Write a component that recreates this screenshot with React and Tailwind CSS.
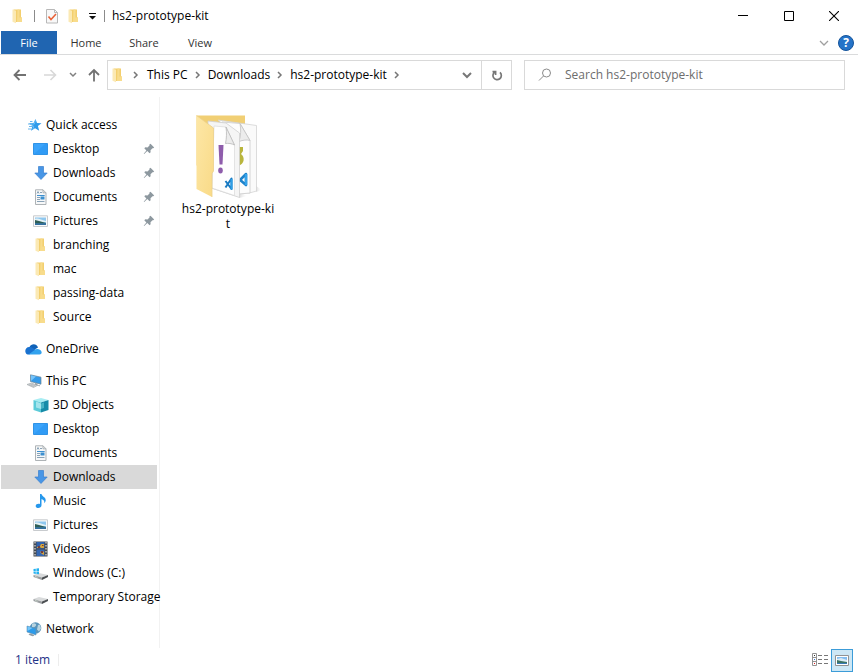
import React from "react";

function Svg({ className = "h-4 w-4", children, ...rest }) {
  return (
    <svg viewBox="0 0 16 16" className={"shrink-0 " + className} fill="none" aria-hidden="true" {...rest}>
      {children}
    </svg>
  );
}

function FolderIcon() {
  return (
    <Svg>
      <path d="M3.500 1.500h7.500v8h1v4.500h-8.500z" fill="#f3cf6e" />
      <path d="M7.500 1.500h2v8h2.500v4.500h-5z" fill="#f8dc8c" />
      <path d="M2.500 1.500l3.500 1.300v12.500l-3.500-1.500z" fill="#fbe9b4" />
    </Svg>
  );
}

function StarIcon() {
  return (
    <Svg>
      <path d="M9.500 2l1.500 4 4.500.2-3.600 2.700 1.300 4.800-4.100-2.500-4.200 2.600 1.500-4.700L3 6.200l4.600-.2z" fill="#2f9bea" />
      <path d="M9.500 3.200L8.300 7l-3.800-.1 3.200 2.400-.7 2.700" stroke="#79c7fa" strokeWidth="0.800" />
      <path d="M4 4.500h2.500M2 7h3M3 9.500h3M2 12h3" stroke="#5aaeea" strokeWidth="0.900" />
    </Svg>
  );
}

function DesktopIcon() {
  return (
    <Svg>
      <path d="M.5 2.500h14v11h-14z" fill="#3ba4fb" stroke="#3093e6" />
      <path d="M1 13L12 3h2v10z" fill="#2996f2" opacity="0.600" />
    </Svg>
  );
}

function DownloadIcon() {
  return (
    <Svg>
      <path d="M5.500 1.500h5v6.500h3.700L8 14.500 1.800 8h3.700z" fill="#4896e6" stroke="#3a80cf" strokeWidth="0.700" />
    </Svg>
  );
}

function DocumentIcon() {
  return (
    <Svg>
      <path d="M2.500.8h7.500l3 3v11.700h-10.500z" fill="#f7f8f9" stroke="#a5aaae" strokeWidth="0.900" />
      <path d="M10 .8v3h3" stroke="#a5aaae" strokeWidth="0.900" />
      <path d="M4 4.500l1-2 1 2M7 3.500h2M4 6.500h7.500M4 8.500h3M4 10.500h3M4 12.500h7.500" stroke="#6d8da6" strokeWidth="0.800" />
      <path d="M4 6h7.500v1H4zM7.500 7.500h4v3h-4z" fill="#3d90d0" />
    </Svg>
  );
}

function PictureIcon() {
  return (
    <Svg>
      <path d="M.5 2.800h14v10.700h-14z" fill="#fafafa" stroke="#c8cbce" />
      <path d="M2 4.500h11v7.500h-11z" fill="#8fc7ee" />
      <path d="M2 6c3-1.500 6 1 11 2v1h-11z" fill="#e3f1f5" />
      <path d="M2 7l4 1 7 2v.7h-11z" fill="#2f5f56" />
      <path d="M2 10.300h11v1.700h-11z" fill="#326f9f" />
    </Svg>
  );
}

function CloudIcon() {
  return (
    <Svg className="h-4 w-[17px]" viewBox="0 0 17 16">
      <path d="M4.500 6C6 2.500 11.500 2 13 6.500l-5 3z" fill="#0f62b8" />
      <path d="M.8 12c-1.500-3 .5-6.200 3.700-6 1.500 0 2.500.5 3.500 1.200l5 3-9 3.300c-1.500.1-2.700-.3-3.200-1.500z" fill="#1971cf" />
      <path d="M3.500 13.500L9 9.500c1.500-1.200 3-1.700 4.500-1.200 3.500.5 4.500 4.900 1 5.200z" fill="#32a2ee" />
    </Svg>
  );
}

function ComputerIcon() {
  return (
    <Svg>
      <path d="M4.500 1.800l10.500 2.400v7l-10.500-2.700z" fill="#349ae9" stroke="#6b8494" strokeWidth="0.700" />
      <path d="M5 2.300l5 1.200-5 4.500z" fill="#75c4fb" />
      <path d="M9 10l3 .8-1 1.500h3v1l-5-.8z" fill="#96a1a8" />
      <path d="M1 11.500l4.500-1.500 6 2.400L7.500 14.500z" fill="#d5d9dc" stroke="#9aa1a5" strokeWidth="0.600" />
      <path d="M3 11.700l5 1.800M4.500 11l5 1.700" stroke="#9aa1a5" strokeWidth="0.500" />
    </Svg>
  );
}

function CubeIcon() {
  return (
    <Svg>
      <path d="M.5 3L8 1l7.500 2L8 5.500z" fill="#a8edf3" />
      <path d="M.5 3L8 5.500v10L.5 13z" fill="#5ccbd9" />
      <path d="M15.500 3L8 5.500v10l7.500-2.500z" fill="#168ba8" />
      <path d="M3 4.500l5 2v5.500l-5-1.500z" fill="#a4e4ec" />
      <path d="M8 6.500l3-1v5.500L8 12z" fill="#48b4c6" />
    </Svg>
  );
}

function MusicIcon() {
  return (
    <Svg>
      <path d="M7 1h1.500c.3 2.500 4.500 3 4.200 6.500-.1 1.300-.8 2-1.400 2.700.4-2.300-.6-3.300-2.800-4.200v6.200c0 3.500-5.800 3.700-5.800.7 0-1.900 2.500-2.700 4.300-1.900z" fill="#2698ec" />
    </Svg>
  );
}

function VideoIcon() {
  return (
    <Svg>
      <path d="M.5.5h14v15H.5z" fill="#44484e" />
      <path d="M3.500 1h8v6.500h-8z" fill="#3163ad" />
      <path d="M3.500 8.500h8V15h-8z" fill="#3467b3" />
      <path d="M7 5l1-2h3v4H8zM4 6l3-1 1 1-2 1H4zM7 11l2-1 2 1v3l-2-1z" fill="#d4a33d" />
      <path d="M5 5h2v2H5zM8 10h2v2H8zM9 4h1.500v1H9z" fill="#773c39" />
      <path d="M2 1v14M13 1v14" stroke="#cfd2d5" strokeWidth="1.300" strokeDasharray="1.500 1.500" />
    </Svg>
  );
}

function DriveIcon({ windows }) {
  return (
    <Svg>
      <path d="M.5 10l5.500-2 9 2-6 2.500z" fill="#d8dadb" />
      <path d="M.5 10L9 12.500V15L.5 12z" fill="#9a9da0" />
      <path d="M9 12.500l6-2.500v2L9 15z" fill="#4c5053" />
      <path d="M2 11.500l2.500.8" stroke="#d9ead9" strokeWidth="0.700" />
      {windows && <path d="M.5 4l2.300-.3v2.300H.500zM3.400 3.600L6 3.200v2.800H3.400zM.5 6.500h2.300v2.400L.5 8.600zM3.400 6.500H6v2.800l-2.600-.3z" fill="#22b1f0" />}
    </Svg>
  );
}

function NetworkIcon() {
  return (
    <Svg>
      <circle cx="9.500" cy="7" r="5.800" fill="#5a94ba" />
      <path d="M6 3c2-2 5 .2 4 1.500S8 7 6 6zM12 4l2-.5 1 4-2 3-2-2z" fill="#b8d3df" />
      <path d="M1 5l9 2.500v6.500L1 11z" fill="#2d9bea" stroke="#6a92ad" strokeWidth="0.600" />
      <path d="M1.500 5.500l5 1.500-5 3z" fill="#76c7fa" />
      <path d="M4 12.500l3 1 1.500 1.200-2 .6-4-1.500z" fill="#8e9ca5" />
    </Svg>
  );
}

function PinIcon() {
  return (
    <Svg className="h-3 w-3" viewBox="0 0 12 12">
      <path d="M7.500.8l3.700 3.700-1 .8-.7-.1-2 2 .1 2-1 1-2.300-2.300L1.200 11l-.5-.3 2.700-3.200L1.300 5.300l1-1 2.200.2 2-2-.1-.9z" fill="#8d989f" />
    </Svg>
  );
}

function Chevron({ className = "", direction = "right", width = 2 }) {
  const d = direction === "right" ? "M2 1l3 3-3 3" : "M0 2l4 4 4-4";
  return (
    <svg viewBox="0 0 8 8" className={"h-2 w-2 shrink-0 overflow-visible " + className} fill="none" stroke="currentColor" strokeWidth={width} aria-hidden="true">
      <path d={d} />
    </svg>
  );
}

const quickAccess = [
  { label: "Desktop", icon: <DesktopIcon />, pinned: true },
  { label: "Downloads", icon: <DownloadIcon />, pinned: true },
  { label: "Documents", icon: <DocumentIcon />, pinned: true },
  { label: "Pictures", icon: <PictureIcon />, pinned: true },
  { label: "branching", icon: <FolderIcon /> },
  { label: "mac", icon: <FolderIcon /> },
  { label: "passing-data", icon: <FolderIcon /> },
  { label: "Source", icon: <FolderIcon /> },
];

const thisPc = [
  { label: "3D Objects", icon: <CubeIcon /> },
  { label: "Desktop", icon: <DesktopIcon /> },
  { label: "Documents", icon: <DocumentIcon /> },
  { label: "Downloads", icon: <DownloadIcon />, selected: true },
  { label: "Music", icon: <MusicIcon /> },
  { label: "Pictures", icon: <PictureIcon /> },
  { label: "Videos", icon: <VideoIcon /> },
  { label: "Windows (C:)", icon: <DriveIcon windows /> },
  { label: "Temporary Storage", icon: <DriveIcon /> },
];

function TreeRow({ label, icon, pinned, selected, root }) {
  return (
    <li>
      <button
        type="button"
        className={
          "flex h-6 w-full items-center gap-1 text-left whitespace-nowrap " +
          (root ? "pl-6 " : "pl-8 ") +
          (selected ? "bg-[#d9d9d9]" : "")
        }
      >
        <span className={root ? "flex w-[17px] justify-center" : "flex w-4 justify-center"}>{icon}</span>
        <span className="flex-1">{label}</span>
        {pinned && <span className="pr-[2px]"><PinIcon /></span>}
      </button>
    </li>
  );
}

function TreeGroup({ label, icon, items = [] }) {
  return (
    <ul>
      <TreeRow root label={label} icon={icon} />
      {items.map((item) => (
        <TreeRow key={item.label} {...item} />
      ))}
    </ul>
  );
}

function BigFolder() {
  return (
    <svg viewBox="0 0 72 88" className="h-[88px] w-[72px]" fill="none" aria-hidden="true">
      <defs>
        <linearGradient id="flap" x1="0" y1="0" x2="1" y2="1">
          <stop offset="0" stopColor="#fde7a6" />
          <stop offset="1" stopColor="#f9da87" />
        </linearGradient>
        <linearGradient id="shade" x1="0" y1="0" x2="1" y2="0">
          <stop offset="0" stopColor="#c9c9c9" stopOpacity="0.700" />
          <stop offset="1" stopColor="#ffffff" stopOpacity="0" />
        </linearGradient>
      </defs>
      <path d="M64 73l6 4-6 2z" fill="url(#shade)" />
      <path d="M47 79l9 4-9 2z" fill="url(#shade)" />
      <path d="M4.500 2.500h48.500v50H4.500z" fill="#f1cf74" />
      <path d="M26 7l38.500 5.500V78l-7 2H40V20z" fill="#fafafa" stroke="#d3d3d3" strokeWidth="0.800" />
      <path d="M30 9l18 1.500 10 17V80l-11 1z" fill="#fdfdfd" stroke="#cccccc" strokeWidth="0.800" />
      <path d="M48 10.500c1 6 1 12-1 18 4-1.500 8-2 11-1z" fill="#ececec" stroke="#c2c2c2" strokeWidth="0.800" />
      <path d="M46 34h5v4l-2 3c4 3 4 10-3 12z" fill="#b9b53c" />
      <path d="M47 66l7 6V61l-7 7" stroke="#1e83cb" strokeWidth="2.600" strokeLinejoin="round" />
      <path d="M54 61v11" stroke="#35a3ea" strokeWidth="2.400" />
      <path d="M16 8l18 2 13.500 10v64.500L40 82 16 74z" fill="#f5f5f5" stroke="#d0d0d0" strokeWidth="0.800" />
      <path d="M22 13l12 1 8.500 18v50.500L20 75z" fill="#fefefe" stroke="#d4d4d4" strokeWidth="0.600" />
      <path d="M34 14c.8 6 .6 11-.5 16.500 3-.5 6 0 9 1.500z" fill="#ececec" stroke="#b8b8b8" strokeWidth="0.800" />
      <path d="M26.500 32h5l-1 19.500h-3z" fill="#8e5cab" />
      <ellipse cx="28.500" cy="57.500" rx="2.300" ry="2.900" fill="#8e5cab" />
      <path d="M33.500 68l6 8V65.500l-6 9" stroke="#187ac2" strokeWidth="2" strokeLinejoin="round" />
      <path d="M39.500 66v10.500" stroke="#2f9fe6" strokeWidth="2" />
      <path d="M4.500 2.500L21.500 15v43l-1.500 2.500V84L4.500 76z" fill="url(#flap)" />
      <path d="M4.500 2.500L21.500 15v43l-1.500 2.500V84" stroke="#ecd08a" strokeWidth="0.800" />
    </svg>
  );
}

function TitleBar() {
  return (
    <header className="flex h-[31px] items-center">
      <div className="flex min-w-0 flex-1 items-center pl-[10px]">
        <FolderIcon />
        <span className="ml-2 h-3 w-px bg-[#8b8b8b]" />
        <button type="button" aria-label="Properties" className="ml-[9px]">
          <Svg>
            <path d="M2.500 1.500h8l3 3v10.500h-11z" fill="#f8f8f8" stroke="#b8b8b8" />
            <path d="M10.500 1.500v3h3" stroke="#b8b8b8" />
            <path d="M4.500 8.500l2.500 3 5-5.500" stroke="#e96238" strokeWidth="1.600" />
          </Svg>
        </button>
        <button type="button" aria-label="New folder" className="ml-[6px]"><FolderIcon /></button>
        <button type="button" aria-label="Customize Quick Access Toolbar" className="ml-[6px]">
          <svg viewBox="0 0 8 8" className="mt-px h-2 w-2" aria-hidden="true"><path d="M1 1h7v1H1zM1 4h7L4.500 7.500z" fill="#111" /></svg>
        </button>
        <span className="ml-2 h-3 w-px bg-[#8b8b8b]" />
        <h1 className="ml-[7px] truncate">hs2-prototype-kit</h1>
      </div>
      <div className="flex h-full text-black">
        <button type="button" aria-label="Minimize" className="flex w-[46px] items-center justify-center">
          <svg viewBox="0 0 10 10" className="h-[10px] w-[10px]" aria-hidden="true"><path d="M0 4.500h10" stroke="currentColor" /></svg>
        </button>
        <button type="button" aria-label="Maximize" className="flex w-[45px] items-center justify-center">
          <svg viewBox="0 0 10 10" className="h-[10px] w-[10px]" fill="none" aria-hidden="true"><path d="M.5.5h9v9h-9z" stroke="currentColor" /></svg>
        </button>
        <button type="button" aria-label="Close" className="mr-px flex w-[46px] items-center justify-center">
          <svg viewBox="0 0 10 10" className="h-[10px] w-[10px]" aria-hidden="true"><path d="M0 0l10 10M10 0L0 10" stroke="currentColor" strokeWidth="1.100" /></svg>
        </button>
      </div>
    </header>
  );
}

function Ribbon() {
  return (
    <div className="flex h-6 items-stretch border-b border-[#dadbdc] pl-px text-[11px] text-[#333]">
      <button type="button" className="w-14 bg-[#2065b1] pt-px text-white">File</button>
      <button type="button" className="w-[58px] pt-px">Home</button>
      <button type="button" className="w-[58px] pt-px">Share</button>
      <button type="button" className="w-[54px] pt-px">View</button>
      <div className="ml-auto flex items-center gap-2 pr-1">
        <button type="button" aria-label="Expand the Ribbon" className="p-[2px] text-[#a0a0a0]"><Chevron direction="down" width={1.300} /></button>
        <button type="button" aria-label="Help" className="flex h-4 w-4 items-center justify-center rounded-full border border-[#15549b] bg-[#2473c8] text-xs font-bold leading-none text-white">?</button>
      </div>
    </div>
  );
}

function Crumb({ children }) {
  return (
    <li className="flex items-center">
      <button type="button">{children}</button>
      <Chevron className="mx-[6px] text-[#777]" width={1.500} />
    </li>
  );
}

function AddressRow() {
  return (
    <div className="flex items-center py-[5px] pr-[13px] pl-3">
      <button type="button" aria-label="Back" className="text-[#727272]">
        <Svg stroke="currentColor" strokeWidth="1.800"><path d="M14 8H3M7.500 3L2.500 8l5 5" /></Svg>
      </button>
      <button type="button" aria-label="Forward" className="ml-[14px] text-[#d8d8d8]">
        <Svg stroke="currentColor" strokeWidth="1.600"><path d="M2 8h11M8.500 3l5 5-5 5" /></Svg>
      </button>
      <button type="button" aria-label="Recent locations" className="ml-3 text-[#808080]">
        <svg viewBox="0 0 6 6" className="h-[6px] w-[6px] overflow-visible" fill="none" aria-hidden="true"><path d="M0 1l3 3 3-3" stroke="currentColor" strokeWidth="1.500" /></svg>
      </button>
      <button type="button" aria-label="Up" className="ml-[10px] text-[#727272]">
        <Svg stroke="currentColor" strokeWidth="1.800"><path d="M8 14.500V3.500M3 8l5-5 5 5" /></Svg>
      </button>
      <div className="ml-[5px] flex h-[30px] min-w-0 flex-1 border border-[#d9d9d9]">
        <nav aria-label="Address" className="flex min-w-0 flex-1 items-center overflow-hidden whitespace-nowrap pl-[2px]">
          <FolderIcon />
          <Chevron className="mr-[7px] ml-[6px] text-[#777]" width={1.500} />
          <ol className="flex">
            <Crumb>This PC</Crumb>
            <Crumb>Downloads</Crumb>
            <Crumb>hs2-prototype-kit</Crumb>
          </ol>
        </nav>
        <button type="button" aria-label="Previous locations" className="flex w-7 items-center justify-center text-[#777]"><Chevron direction="down" /></button>
        <button type="button" aria-label="Refresh" className="flex w-[30px] items-center justify-center border-l border-[#d9d9d9] text-[#777]">
          <svg viewBox="0 0 12 12" className="h-3 w-3" fill="none" stroke="currentColor" strokeWidth="1.700" aria-hidden="true">
            <path d="M9 3.400A4.200 4.200 0 1 1 4.500 2.600H1.500M4.600 1.800V6" />
          </svg>
        </button>
      </div>
      <div className="ml-3 flex h-[30px] w-[321px] shrink items-center border border-[#d9d9d9] pl-3">
        <Svg stroke="#8a8a8a" strokeWidth="1"><circle cx="9.500" cy="6" r="4" /><path d="M6.500 9L2 13.500" /></Svg>
        <input type="search" aria-label="Search hs2-prototype-kit" placeholder="Search hs2-prototype-kit" className="ml-3 min-w-0 flex-1 outline-none placeholder:text-[#6d6d6d]" />
      </div>
    </div>
  );
}

export default function App() {
  return (
    <div className="flex min-h-screen flex-col bg-white font-['Open_Sans','Noto_Sans',sans-serif] text-xs text-black">
      <TitleBar />
      <Ribbon />
      <AddressRow />
      <div className="flex flex-1 pt-[2px]">
        <nav aria-label="Folders" className="flex w-40 shrink-0 flex-col gap-2 border-r border-[#f2f2f2] pt-4 pr-[2px] pb-1 pl-px">
          <TreeGroup label="Quick access" icon={<StarIcon />} items={quickAccess} />
          <TreeGroup label="OneDrive" icon={<CloudIcon />} />
          <TreeGroup label="This PC" icon={<ComputerIcon />} items={thisPc} />
          <TreeGroup label="Network" icon={<NetworkIcon />} />
        </nav>
        <main className="flex flex-1 flex-wrap content-start pt-4 pl-5">
          <button type="button" className="flex w-24 flex-col items-center text-center">
            <BigFolder />
            <span className="w-[94px] leading-[15px] break-all">hs2-prototype-kit</span>
          </button>
        </main>
      </div>
      <footer className="flex h-6 items-center pl-[15px] text-[#1e3287]">
        <span>1 item</span>
        <span className="ml-2 h-3 w-px bg-[#ededed]" />
        <div className="ml-auto flex items-center gap-[2px] pr-[5px]">
          <button type="button" aria-label="Details view" className="px-[1px]">
            <svg viewBox="0 0 16 14" className="h-[14px] w-4" fill="none" aria-hidden="true">
              <path d="M.5.5h4v12h-4zM.5 4.500h4M.5 8.500h4" stroke="#929292" />
              <path d="M6 2.500h4M12 2.500h4M6 6.500h4M12 6.500h4M6 10.500h4M12 10.500h4" stroke="#777" />
              <path d="M2 2h1v1H2z" fill="#333" /><path d="M2 6h1v1H2z" fill="#3273dc" /><path d="M2 10h1v1H2z" fill="#e02020" />
            </svg>
          </button>
          <button type="button" aria-label="Large icons view" aria-pressed="true" className="flex h-[23px] w-[22px] items-center justify-center border border-[#3c9cd8] bg-[#cde7f5]">
            <svg viewBox="0 0 14 11" className="h-[11px] w-[14px]" aria-hidden="true">
              <path d="M.5.5h13v10H.5z" fill="#fff" stroke="#929292" />
              <path d="M2 2h10v7H2z" fill="#83bdf0" /><path d="M2 4l4-1 6 2v2H2z" fill="#dcebf5" /><path d="M2 5l4 1 6 1v2H2z" fill="#3c7464" /><path d="M2 8h10v1H2z" fill="#3879b6" />
            </svg>
          </button>
        </div>
      </footer>
    </div>
  );
}
